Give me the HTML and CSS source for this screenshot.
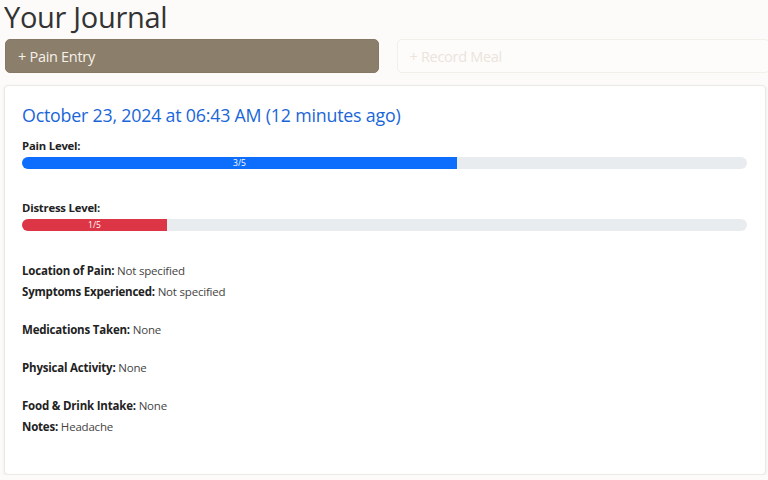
FILE: index.html
```html
<!DOCTYPE html>
<html>
    <head>
        <title>Your Journal</title>
        <meta charset="UTF-8">
        <meta name="viewport" content="width=device-width, initial-scale=1">
        <link rel="stylesheet" href="styles.css">
    </head>
    <body>
        <h1 class="title">Your Journal</h1>

        <div class="actions">
            <button class="btn btn-pain">+ Pain Entry</button>
            <button class="btn btn-meal" disabled>+ Record Meal</button>
        </div>

        <div class="entry">
            <h2 class="entry-date">October 23, 2024 at 06:43 AM (12 minutes ago)</h2>

            <div class="level">
                <div class="label">Pain Level:</div>
                <div class="bar">
                    <div class="fill fill-pain" style="width: 60%">3/5</div>
                </div>
            </div>

            <div class="level">
                <div class="label">Distress Level:</div>
                <div class="bar">
                    <div class="fill fill-distress" style="width: 20%">1/5</div>
                </div>
            </div>

            <div class="group">
                <p><b>Location of Pain:</b> Not specified</p>
                <p><b>Symptoms Experienced:</b> Not specified</p>
            </div>
            <div class="group">
                <p><b>Medications Taken:</b> None</p>
            </div>
            <div class="group">
                <p><b>Physical Activity:</b> None</p>
            </div>
            <div class="group">
                <p><b>Food &amp; Drink Intake:</b> None</p>
                <p><b>Notes:</b> Headache</p>
            </div>
        </div>
    </body>
</html>
```

FILE: styles.css
```css
body {
    margin: 0 ;
    padding: 0 2px 0 4px ;
    background: #fcfbfa ;
    font-family: 'Open Sans', 'Noto Sans', sans-serif ;
    color: #222 ;
}
.title {
    margin: 0 ;
    font-size: 29px ;
    font-weight: 400 ;
    line-height: 34px ;
    color: #333 ;
    letter-spacing: -0.3px ;
}
.actions {
    display: flex ;
    gap: 18px ;
    margin: 5px 0 12px 1px ;
}
.btn {
    flex: 1 ;
    height: 34px ;
    border-radius: 5px ;
    padding: 0 12px ;
    text-align: left ;
    font-family: 'Open Sans', sans-serif ;
    font-size: 14.5px ;
    letter-spacing: -0.3px ;
}
.btn-pain {
    background: #8b7e6a ;
    border: 1px solid #857864 ;
    color: #f6f1e8 ;
}
.btn-meal {
    background: #fdfcfb ;
    border: 1px solid #f3efea ;
    color: #ebe4dc ;
    margin-right: -4px ;
}
.entry {
    background: #fff ;
    border: 1px solid #ebe9e6 ;
    border-radius: 4px ;
    box-shadow: 0 1px 3px rgba(0, 0, 0, 0.08) ;
    padding: 16px 18px 30px 17px ;
    height: 342px ;
}
.entry-date {
    margin: 1px 0 11px 0 ;
    font-size: 17.8px ;
    font-weight: 400 ;
    color: #1a66d8 ;
    letter-spacing: -0.2px ;
}
.level {
    margin-bottom: 31px ;
}
.label {
    font-size: 11.3px ;
    font-weight: 700 ;
    color: #222 ;
    margin-bottom: 4px ;
    letter-spacing: -0.2px ;
}
.bar {
    height: 12px ;
    background: #e9ecef ;
    border-radius: 6px ;
    overflow: hidden ;
}
.fill {
    height: 100% ;
    color: #fff ;
    font-size: 8.5px ;
    line-height: 12px ;
    text-align: center ;
}
.fill-pain { background: #0d6efd ; }
.fill-distress { background: #dc3545 ; }
.group {
    margin-bottom: 21px ;
}
.group p {
    margin: 0 0 4px 0 ;
    font-size: 11.5px ;
    line-height: 17px ;
    color: #444 ;
    letter-spacing: -0.2px ;
}
.group b {
    color: #222 ;
}
```
